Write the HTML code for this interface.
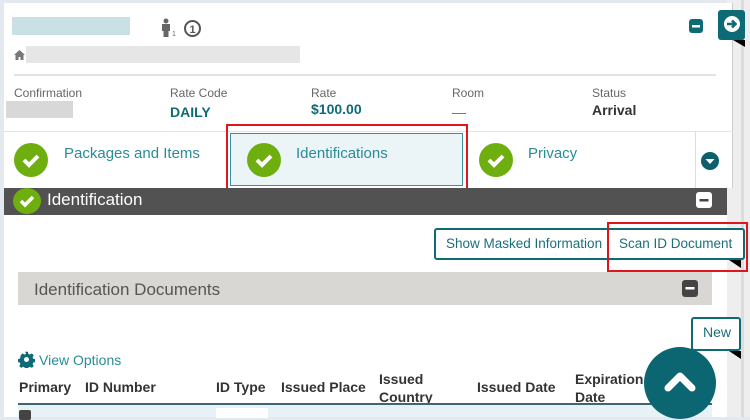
<!DOCTYPE html>
<html><head><meta charset="utf-8"><style>
*{margin:0;padding:0;box-sizing:border-box}
body{width:750px;height:417px;overflow:hidden;background:#e4e9f0;font-family:"Liberation Sans",sans-serif;position:relative}
.a{position:absolute}
.lbl{font-size:12px;color:#666}
.val{font-size:14px;font-weight:bold;color:#0e6b76}
.teal{color:#2b8b96}
.chk{position:absolute;border-radius:50%;background:#6eae0e}
.th{position:absolute;font-size:14px;font-weight:bold;color:#333;top:378px;line-height:18px}
</style></head><body>
<!-- scrollbar area -->
<div class="a" style="left:727px;top:0;width:23px;height:417px;background:#eeeeee"></div>
<div class="a" style="left:741px;top:0;width:3px;height:417px;background:#dcdcdc"></div>
<!-- main content white -->
<div class="a" style="left:4px;top:3px;width:723px;height:414px;background:#fff"></div>
<!-- card -->
<div class="a" style="left:4px;top:3px;width:729px;height:185px;background:#fff;border-right:1px solid #ccc"></div>
<div class="a" style="left:12px;top:17px;width:118px;height:18px;background:#c9e1e5"></div>
<svg class="a" style="left:160px;top:18px" width="18" height="20" viewBox="0 0 18 20"><circle cx="6" cy="3" r="2.5" fill="#666"/><path d="M2 6h8v7H8.5v6h-5v-6H2z" fill="#666"/><text x="12" y="18" font-size="7" fill="#666" font-family="Liberation Sans">1</text></svg>
<svg class="a" style="left:183px;top:19px" width="19" height="19"><circle cx="9.5" cy="9.5" r="7.5" fill="none" stroke="#555" stroke-width="2"/><text x="9.5" y="14" font-size="11" font-weight="bold" text-anchor="middle" fill="#555" font-family="Liberation Sans">1</text></svg>
<svg class="a" style="left:14px;top:50px" width="11" height="10"><path d="M5.5 0L0 5h1.5v5h3V7h2v3h3V5H11z" fill="#777"/></svg>
<div class="a" style="left:26px;top:46px;width:274px;height:17px;background:#e6e6e6"></div>
<div class="a" style="left:14px;top:74px;width:328px;height:1px;background:#e0e0e0;width:328px"></div>
<div class="a" style="left:14px;top:74px;width:328px;height:2px;background:#e3e3e3;width:328px"></div>
<div class="a" style="left:14px;top:74px;width:702px;height:2px;background:#e3e3e3"></div>
<svg class="a" style="left:689px;top:19px" width="14" height="14"><rect width="14" height="14" rx="3" fill="#0e6b76"/><rect x="3" y="6" width="8" height="2.5" fill="#fff"/></svg>
<div class="a" style="left:718px;top:10px;width:27px;height:30px;background:#0e6b76;border-radius:3px"></div>
<svg class="a" style="left:722px;top:14px" width="20" height="20"><circle cx="10" cy="10" r="8" fill="#fff"/><path d="M5 10h8M10 6.5l3.5 3.5-3.5 3.5" stroke="#0e6b76" stroke-width="2.6" fill="none"/></svg>
<div class="a" style="left:733px;top:40px;width:0;height:0;border-left:12px solid transparent;border-top:7px solid #000"></div>

<div class="a lbl" style="left:14px;top:86px">Confirmation</div>
<div class="a" style="left:6px;top:101px;width:67px;height:17px;background:#d8d8d8"></div>
<div class="a lbl" style="left:170px;top:86px">Rate Code</div>
<div class="a val" style="left:170px;top:104px">DAILY</div>
<div class="a lbl" style="left:311px;top:86px">Rate</div>
<div class="a val" style="left:311px;top:101px">$100.00</div>
<div class="a lbl" style="left:452px;top:86px">Room</div>
<div class="a" style="left:452px;top:113px;width:14px;height:1px;background:#777"></div>
<div class="a lbl" style="left:592px;top:86px">Status</div>
<div class="a" style="left:592px;top:102px;font-size:14px;font-weight:bold;color:#333">Arrival</div>

<!-- tabs -->
<div class="a" style="left:4px;top:131px;width:729px;height:1px;background:#e3e3e3"></div>
<div class="a" style="left:695px;top:131px;width:1px;height:57px;background:#ddd"></div>
<div class="chk" style="left:14px;top:143px;width:34px;height:34px"></div>
<svg class="a" style="left:14px;top:143px" width="34" height="34"><path d="M10 17l5 5 9-9" stroke="#fff" stroke-width="4" fill="none"/></svg>
<div class="a teal" style="left:64px;top:145px;font-size:15px">Packages and Items</div>
<div class="a" style="left:230px;top:133px;width:233px;height:53px;background:#ebf4f7;border:1px solid #3b8f99"></div>
<div class="a" style="left:226px;top:124px;width:242px;height:71px;border:2px solid #e0161e"></div>
<div class="chk" style="left:247px;top:143px;width:34px;height:34px"></div>
<svg class="a" style="left:247px;top:143px" width="34" height="34"><path d="M10 17l5 5 9-9" stroke="#fff" stroke-width="4" fill="none"/></svg>
<div class="a teal" style="left:296px;top:145px;font-size:15px">Identifications</div>
<div class="chk" style="left:479px;top:143px;width:34px;height:34px"></div>
<svg class="a" style="left:479px;top:143px" width="34" height="34"><path d="M10 17l5 5 9-9" stroke="#fff" stroke-width="4" fill="none"/></svg>
<div class="a teal" style="left:528px;top:145px;font-size:15px">Privacy</div>
<svg class="a" style="left:700px;top:151px" width="20" height="20"><circle cx="10" cy="10" r="9" fill="#0e5f6c"/><path d="M5.5 8h9L10 13z" fill="#fff"/></svg>

<!-- dark bar -->
<div class="a" style="left:4px;top:188px;width:723px;height:27px;background:#525252"></div>
<div class="chk" style="left:13px;top:188px;width:28px;height:26px"></div>
<svg class="a" style="left:13px;top:187px" width="28" height="28"><path d="M8 14l4 4 8-8" stroke="#fff" stroke-width="3.5" fill="none"/></svg>
<div class="a" style="left:47px;top:190px;font-size:17px;color:#fff">Identification</div>
<svg class="a" style="left:696px;top:192px" width="16" height="16"><rect width="16" height="16" rx="3" fill="#fff"/><rect x="3.5" y="7" width="9" height="2.5" fill="#444"/></svg>

<!-- buttons -->
<div class="a" style="left:434px;top:228px;width:311px;height:32px;border:2px solid #0e6b76;border-radius:3px;background:#fff"></div>
<div class="a" style="left:446px;top:236px;font-size:13.5px;color:#1b6f7a">Show Masked Information</div>
<div class="a" style="left:619px;top:236px;font-size:13.5px;color:#1b6f7a">Scan ID Document</div>
<div class="a" style="left:607px;top:222px;width:141px;height:50px;border:2px solid #e0161e"></div>
<div class="a" style="left:729px;top:260px;width:0;height:0;border-left:12px solid transparent;border-top:8px solid #000"></div>

<!-- section -->
<div class="a" style="left:18px;top:272px;width:694px;height:33px;background:#d8d7d4"></div>
<div class="a" style="left:34px;top:280px;font-size:17px;color:#555">Identification Documents</div>
<svg class="a" style="left:682px;top:280px" width="16" height="17"><rect width="16" height="17" rx="3" fill="#444"/><rect x="3.5" y="7" width="9" height="2.5" fill="#fff"/></svg>

<div class="a" style="left:691px;top:317px;width:50px;height:34px;border:2px solid #0e6b76;border-radius:3px;background:#fff"></div>
<div class="a" style="left:703px;top:324px;font-size:14px;color:#1b6f7a">New</div>
<div class="a" style="left:729px;top:351px;width:0;height:0;border-left:12px solid transparent;border-top:8px solid #000"></div>

<svg class="a" style="left:18px;top:351px" width="17" height="17" viewBox="0 0 24 24"><path fill="#0e6b76" d="M10 1h4l.6 3 2.3 1 2.6-1.7 2.8 2.8-1.7 2.6 1 2.3 3 .6v4l-3 .6-1 2.3 1.7 2.6-2.8 2.8-2.6-1.7-2.3 1-.6 3h-4l-.6-3-2.3-1-2.6 1.7-2.8-2.8 1.7-2.6-1-2.3-3-.6v-4l3-.6 1-2.3L3.7 6.1 6.5 3.3l2.6 1.7 2.3-1z"/><circle cx="12" cy="12" r="3.5" fill="#fff"/></svg>
<div class="a" style="left:39px;top:352px;font-size:14px;color:#2b8b96">View Options</div>

<div class="th" style="left:19px;top:378px">Primary</div>
<div class="th" style="left:85px;top:378px">ID Number</div>
<div class="th" style="left:216px;top:378px">ID Type</div>
<div class="th" style="left:281px;top:378px">Issued Place</div>
<div class="th" style="left:379px;top:370px">Issued<br>Country</div>
<div class="th" style="left:477px;top:378px">Issued Date</div>
<div class="th" style="left:575px;top:370px">Expiration<br>Date</div>
<div class="a" style="left:18px;top:403px;width:694px;height:2px;background:#3d6670"></div>
<div class="a" style="left:18px;top:405px;width:694px;height:12px;background:#e6f2f5"></div>
<div class="a" style="left:19px;top:410px;width:12px;height:10px;background:#444;border-radius:2px"></div>
<div class="a" style="left:216px;top:408px;width:52px;height:10px;background:#fff"></div>
<div class="a" style="left:693px;top:408px;width:3px;height:5px;background:#0e6b76"></div>

<div class="a" style="left:644px;top:347px;width:72px;height:72px;border-radius:50%;background:#0b6671"></div>
<svg class="a" style="left:644px;top:347px" width="72" height="72"><path d="M24 41l12-12 12 12" stroke="#fff" stroke-width="7" fill="none" stroke-linecap="round" stroke-linejoin="round"/></svg>
</body></html>
